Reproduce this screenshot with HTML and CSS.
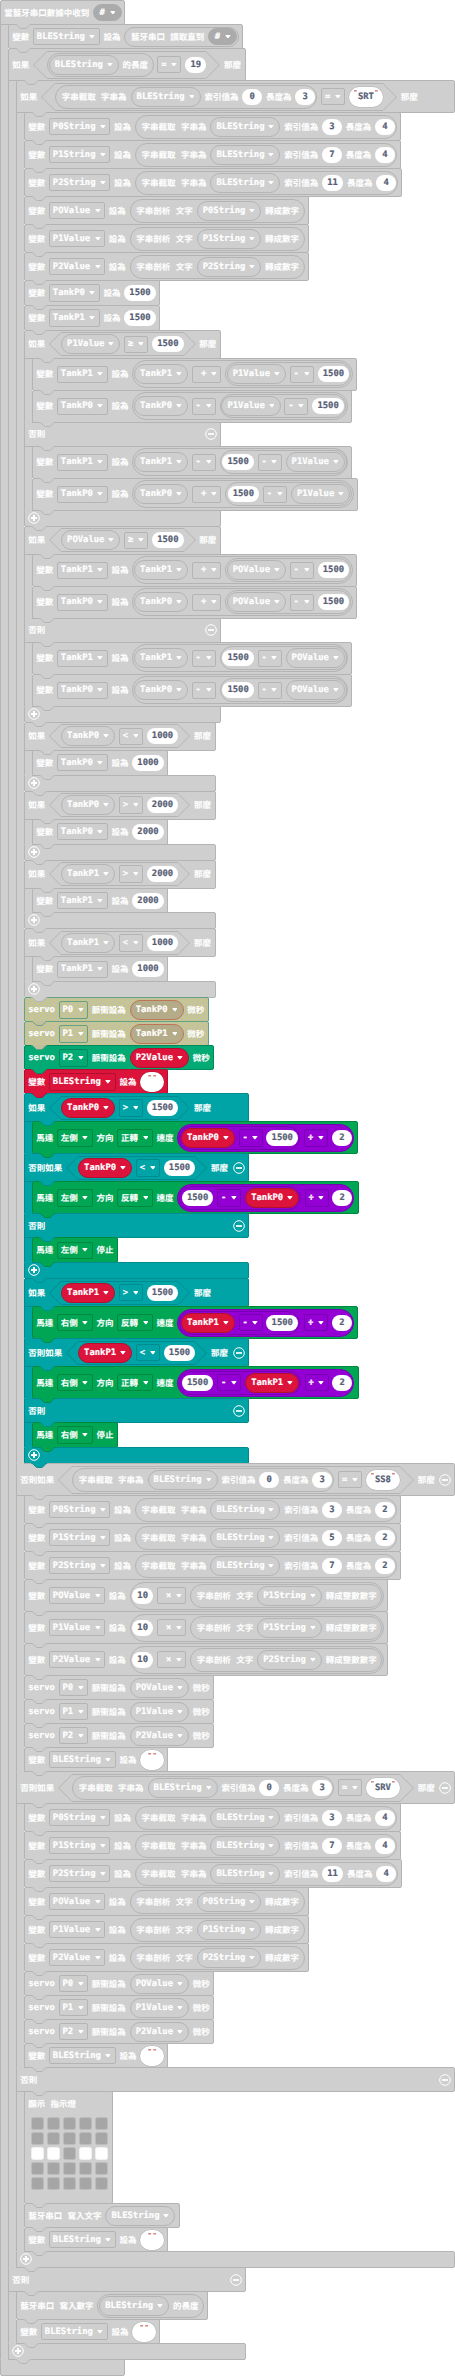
FILE: index.html
```html
<!DOCTYPE html>
<html lang="zh-Hant">
<head>
<meta charset="utf-8">
<title>Blocks</title>
<link rel="stylesheet" href="styles.css">
</head>
<body>
<main id="workspace" class="workspace"></main>
<script src="blocks.js"></script>
</body>
</html>
```

FILE: styles.css
```css
html, body { margin: 0; background: #fff; }
body { width: 455px; height: 2376px; overflow: hidden; }
.workspace {
  margin-left: -0.3px;
  font: bold 8.87px/12px "DejaVu Sans Mono", "Noto Sans CJK TC", monospace;
  text-rendering: geometricPrecision;
  color: #fff;
  white-space: pre;
}

/* Palette: --c is the fill, --l the outline */
.gray { --c: #cfcfcf; --l: #b4b4b4; }
.teal { --c: #00a4a6; --l: #008b8f; }
.green { --c: #00a654; --l: #00883f; }
.servo { --c: #03aa74; --l: #02885d; }
.red { --c: #dc143c; --l: #b01030; }
.purple { --c: #9400d3; --l: #7800b4; }
.hatch { --c: #c2bf9d; --l: #62a184; }

/* Block stacks */
.cblock { display: flex; flex-direction: column; align-items: flex-start; }
.body {
  display: flex;
  flex-direction: column;
  align-items: flex-start;
  box-sizing: border-box;
  padding-left: 7px;
  border-left: 1px solid var(--l);
  background: linear-gradient(var(--c), var(--c)) left / 7px 100% no-repeat;
}
.row {
  position: relative;
  box-sizing: border-box;
  flex: none;
  display: flex;
  align-items: center;
  gap: 3.8px;
  height: calc(var(--h) + 1px);
  margin-bottom: -1px;
  padding: 0 3.2px 0 3.5px;
  border: 1px solid var(--l);
  border-radius: 2px;
  background: var(--c);
}
.row.mid::before, .row.foot::before {
  content: "";
  position: absolute;
  left: 0; top: -1px;
  width: 7px; height: 1px;
  background: var(--c);
}
.row.mid, .row.foot { border-top-left-radius: 0; }
.row.head, .row.mid { border-bottom-left-radius: 0; }
.row.hatch {
  background:
    repeating-linear-gradient(45deg, #d2d04a99 0 0.8px, transparent 0.8px 2.83px),
    repeating-linear-gradient(-45deg, #d2d04a99 0 0.8px, transparent 0.8px 2.83px),
    #c0bfb4;
}
.notch { position: absolute; top: -1px; left: 6px; width: 17px; height: 6px; }
.mid > .notch, .foot > .notch { left: 14px; }
.notch .in { fill: var(--c); }
.notch .edge { fill: none; stroke: var(--l); }

/* Inline parts */
.t, .cjk { flex: none; }
.t { -webkit-text-stroke: 0.2px currentColor; }
.cjk {
  font-size: 8.5px;
  font-weight: bold;
  font-family: "Noto Sans CJK TC", sans-serif;
  -webkit-text-stroke: 0.08px currentColor;
}
.sp { display: inline-block; width: 5.4px; }
.field, .var, .pill {
  box-sizing: border-box;
  flex: none;
  display: flex;
  align-items: center;
  justify-content: space-between;
  border: 1px solid var(--l);
}
.field { height: 17.5px; padding: 0 3.4px 0 2.8px; gap: 4.6px; border-radius: 2px; }
.var { height: 20px; padding: 0 5.2px 0 5.1px; gap: 3.9px; border-radius: 10px; background: var(--c); }
.pill { height: 17px; padding: 0 5.6px; gap: 4.6px; border-radius: 9px; background: #ababab; border-color: #ababab; }
.arrow { width: 5.8px; height: 3.8px; fill: currentColor; }

.var, .row .var { --c: #dc143c; --l: #b01030; }
.row.gray .var { --c: #cfcfcf; --l: #b4b4b4; }
.row.hatch .var { --c: #b4ab88; --l: #bd7557; }

.oval {
  box-sizing: border-box;
  flex: none;
  display: flex;
  align-items: center;
  gap: 3.9px;
  height: 24px;
  padding: 0 0.7px;
  border: 1px solid var(--l);
  border-radius: 14px;
  background: var(--c);
}
.oval.low { height: 20px; }
.oval.high { height: 28px; }
.oval > .cjk:first-child { margin-left: 5px; }
.oval > .cjk:last-child { margin-right: 3.8px; }
.oval > .num:first-child { margin-left: 1px; }
.oval > .num:last-child { margin-right: 0.6px; }

.num, .str {
  box-sizing: border-box;
  flex: none;
  display: flex;
  align-items: center;
  justify-content: center;
  border-radius: 10px;
  background: #fff;
  color: #575e75;
  -webkit-text-stroke: 0.2px currentColor;
}
.num { height: 16px; min-width: 19.7px; padding: 0 5.1px; }
.str { height: 20px; min-width: 24px; padding: 0 4px; box-shadow: 0 0 0 0.5px var(--l); }
.str i {
  width: 5px;
  margin-top: 3px;
  align-self: flex-start;
  font: bold 5.5px/6px "DejaVu Sans Mono", monospace;
  text-align: center;
  color: #c44a4a;
}

.hex { flex: none; display: flex; height: 24px; }
.hex.tall { height: 28px; }
.hexmid {
  box-sizing: border-box;
  display: flex;
  align-items: center;
  gap: 3.9px;
  border: solid var(--l);
  border-width: 1px 0;
}
.point { width: 12px; height: 24px; fill: none; stroke: var(--l); }
.tall .point { width: 14px; height: 28px; }
.point.r { transform: scaleX(-1); }

.btn { width: 12px; height: 12px; fill: none; stroke: #fff; }
.mid .btn { margin-left: auto; }
.row.foot { padding-left: 3px; padding-bottom: 1px; }

/* LED matrix */
.leds-block { flex-direction: column; align-items: flex-start; gap: 0; width: 89px; padding: 6px 0 0 3.5px; }
.leds { display: grid; grid-template-columns: repeat(5, 13px); gap: 2px 3px; margin: 7px 0 0 3.2px; }
.leds b { width: 13px; height: 13px; box-sizing: border-box; border: 1px solid #bcbcbc; border-radius: 2.5px; background: #a6a6a6; }
.leds b.on { background: #fff; border-color: #f0f0f0; }
```

FILE: blocks.js
```js
// Inline parts
const arrow = '<svg class="arrow" viewBox="0 0 6 4"><path d="M.8 0h4.4q.8.1.3.8L3.5 3.3q-.5.5-1 0L.5.8Q0 .1.8 0z"/></svg>';
const isCjk = s => /[\u4e00-\u9fff]/.test(s);
const t = s => `<span class="${isCjk(s) ? 'cjk' : 't'}">${s.replace(/ /g, '<span class="sp"> </span>')}</span>`;
const f = s => `<span class="field"><span class="${isCjk(s) ? 'cjk' : 't'}">${s}</span>${arrow}</span>`;
const v = s => `<span class="var"><span class="t">${s}</span>${arrow}</span>`;
const pill = s => `<span class="pill"><span class="t">${s}</span>${arrow}</span>`;
const n = s => `<span class="num">${s}</span>`;
const str = s => `<span class="str"><i>"</i>${s}<i>"</i></span>`;
const oval = (cls, ...p) => `<span class="oval ${cls}">${p.join('')}</span>`;
const point = (cls, tall) => tall
  ? `<svg class="point ${cls}" viewBox="0 0 14 28"><path d="M14 .5L.6 14 14 27.5"/></svg>`
  : `<svg class="point ${cls}" viewBox="0 0 12 24"><path d="M12 .5L.6 12 12 23.5"/></svg>`;
const hex = (tall, ...p) => `<span class="hex ${tall ? 'tall' : ''}">${point('l', tall)}<span class="hexmid">${p.join('')}</span>${point('r', tall)}</span>`;
const minus = '<svg class="btn" viewBox="0 0 12 12"><circle cx="6" cy="6" r="5.3"/><path stroke-width="1.7" d="M3 6h6"/></svg>';
const plus = '<svg class="btn" viewBox="0 0 12 12"><circle cx="6" cy="6" r="5.3"/><path stroke-width="2" d="M3 6h6M6 3v6"/></svg>';
const notch = color => {
  const d = 'q1 0 1.8.8l2.4 2.4q.8.8 1.8.8h3.6q1 0 1.8-.8l2.4-2.4q.8-.8 1.8-.8';
  return `<svg class="notch ${color}" viewBox="0 0 17 6"><path class="in" d="M.5 0v.5${d}V0z"/><path class="edge" d="M.5.5${d}"/></svg>`;
};

// A block is { color, html(prevColor) }
const row = (color, kind, h, prev, html, w) =>
  `<div class="row ${color} ${kind}" style="--h:${h}px${w ? `;width:${w}px` : ''}">${prev ? notch(prev) : ''}${html}</div>`;
const st = (color, h, ...p) => ({ color, html: prev => row(color, 'stmt', h, prev, p.join('')) });
const cb = (color, w, first, ...sections) => ({
  color,
  html: prev => {
    let out = '';
    let last = prev;
    for (const [h, head, blocks] of sections) {
      out += row(color, out ? 'mid' : 'head', h, last, head, w);
      last = color;
      out += `<div class="body ${color}">`;
      for (const b of blocks) { out += b.html(last); last = b.color; }
      out += '</div>';
    }
    return `<div class="cblock">${out}${row(color, 'foot', 16, last, first ? '' : plus, w)}</div>`;
  }
});

// Block vocabulary
const G = 'gray';
const set = (h, name, val, color = G) => st(color, h, t('變數'), f(name), t('設為'), val);
const setNum = (name, val) => set(24.9, name, n(val));
const clear = (color = G) => set(24, 'BLEString', str(''), color);
const substr = (a, b) => oval('', t('字串截取 字串為'), v('BLEString'), t('索引值為'), n(a), t('長度為'), n(b));
const valueName = i => (i === 0 ? 'POValue' : `P${i}Value`);
const setSub = (i, a, b) => set(28, `P${i}String`, substr(a, b));
const setParse = i => set(28, valueName(i), oval('', t('字串剖析 文字'), v(`P${i}String`), t('轉成數字')));
const setTimes = (i, j) => set(32, valueName(i),
  oval('high', n('10'), f(' ×'), oval('', t('字串剖析 文字'), v(`P${j}String`), t('轉成整數數字'))));
const math = (size, a, op, b) => oval(size, a, f(op), b);
const setMath = (name, op, a, b) => set(32, name, math('high', v(name), op, math('', a, '-', b)));
const servo = (color, i, name) => st(color, 24, t('servo'), f(`P${i}`), t('脈衝設為'), v(name), t('微秒'));
const cmp = (name, op, val) => hex(false, v(name), f(op), n(val));
const ifHead = cond => t('如果') + cond + t('那麼');
const elifHead = cond => t('否則如果') + cond + t('那麼') + minus;
const elseHead = t('否則') + minus;
const code = s => hex(true, substr('0', '3'), f('='), str(s));
const clamp = (name, op, val) => cb(G, 192.3, false, [28, ifHead(cmp(name, op, val)), [setNum(name, val)]]);
const drive = (side, dir, a, b) => st('green', 32, t('馬達'), f(side), t('方向'), f(dir), t('速度'),
  oval('high purple', oval('', a, f('-'), b), f('÷'), n('2')));
const stop = side => st('green', 24.9, t('馬達'), f(side), t('停止'));
const steer = (name, side, d1, d2) => cb('teal', 225, false,
  [28, ifHead(cmp(name, '&gt;', '1500')), [drive(side, d1, v(name), n('1500'))]],
  [28, elifHead(cmp(name, '&lt;', '1500')), [drive(side, d2, n('1500'), v(name))]],
  [24, elseHead, [stop(side)]]);
const leds = {
  color: G,
  html: prev => {
    let cells = '';
    for (let i = 0; i < 25; i++) cells += `<b${[10, 11, 13, 14].includes(i) ? ' class="on"' : ''}></b>`;
    return row(G, 'leds-block', 112, prev, t('顯示 指示燈') + `<div class="leds">${cells}</div>`);
  }
};

const received = [
  setSub(0, '3', '4'), setSub(1, '7', '4'), setSub(2, '11', '4'),
  setParse(0), setParse(1), setParse(2)
];
const srt = [
  ...received,
  setNum('TankP0', '1500'), setNum('TankP1', '1500'),
  cb(G, 197.3, false,
    [28, ifHead(cmp('P1Value', '≥', '1500')), [
      setMath('TankP1', ' +', v('P1Value'), n('1500')),
      setMath('TankP0', '-', v('P1Value'), n('1500'))]],
    [24, elseHead, [
      setMath('TankP1', '-', n('1500'), v('P1Value')),
      setMath('TankP0', ' +', n('1500'), v('P1Value'))]]),
  cb(G, 197.3, false,
    [28, ifHead(cmp('POValue', '≥', '1500')), [
      setMath('TankP1', ' +', v('POValue'), n('1500')),
      setMath('TankP0', ' +', v('POValue'), n('1500'))]],
    [24, elseHead, [
      setMath('TankP1', '-', n('1500'), v('POValue')),
      setMath('TankP0', '-', n('1500'), v('POValue'))]]),
  clamp('TankP0', '&lt;', '1000'), clamp('TankP0', '&gt;', '2000'),
  clamp('TankP1', '&gt;', '2000'), clamp('TankP1', '&lt;', '1000'),
  servo('hatch', 0, 'TankP0'), servo('hatch', 1, 'TankP1'), servo('servo', 2, 'P2Value'),
  clear('red'),
  steer('TankP0', '左側', '正轉', '反轉'),
  steer('TankP1', '右側', '反轉', '正轉')
];
const servos = [servo(G, 0, 'POValue'), servo(G, 1, 'P1Value'), servo(G, 2, 'P2Value'), clear()];
const ss8 = [
  setSub(0, '3', '2'), setSub(1, '5', '2'), setSub(2, '7', '2'),
  setTimes(0, 1), setTimes(1, 1), setTimes(2, 2), ...servos
];

const program = cb(G, 125, true, [24, t('當藍牙串口數據中收到') + pill('#'), [
  set(24, 'BLEString', oval('low', t('藍牙串口 讀取直到'), pill('#'))),
  cb(G, 238.7, false,
    [32, ifHead(hex(true, oval('', v('BLEString'), t('的長度')), f('='), n('19'))), [
      cb(G, 439.3, false,
        [32, ifHead(code('SRT')), srt],
        [32, elifHead(code('SS8')), ss8],
        [32, elifHead(code('SRV')), [...received, ...servos]],
        [24, elseHead, [leds, st(G, 24, t('藍牙串口 寫入文字'), v('BLEString')), clear()]])]],
    [24, elseHead, [
      st(G, 28, t('藍牙串口 寫入數字'), oval('', v('BLEString'), t('的長度'))),
      clear()]])
]]);
document.getElementById('workspace').innerHTML = program.html('');
```
